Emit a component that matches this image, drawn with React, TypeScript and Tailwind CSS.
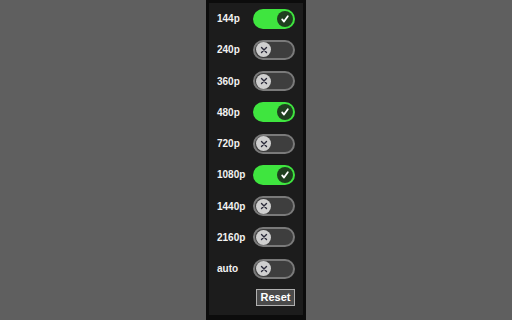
type Option = {
  label: string
  on: boolean
}

const options: Option[] = [
  { label: "144p", on: true },
  { label: "240p", on: false },
  { label: "360p", on: false },
  { label: "480p", on: true },
  { label: "720p", on: false },
  { label: "1080p", on: true },
  { label: "1440p", on: false },
  { label: "2160p", on: false },
  { label: "auto", on: false },
]

function Toggle({ on }: { on: boolean }) {
  if (on) {
    return (
      <div className="flex h-[20px] w-[42px] items-center justify-end rounded-full bg-[#3fe53f] pr-[2px]">
        <div className="flex h-[16px] w-[16px] items-center justify-center rounded-full bg-[#1f3f1f]">
          <svg width="10" height="10" viewBox="0 0 10 10">
            <path
              d="M2.2 5.4 L4 7.6 L7.8 2.2"
              fill="none"
              stroke="#ffffff"
              strokeWidth="1.8"
              strokeLinecap="round"
              strokeLinejoin="round"
            />
          </svg>
        </div>
      </div>
    )
  }
  return (
    <div className="flex h-[20px] w-[42px] items-center rounded-full border-2 border-[#7a7a7a] bg-[#3e3e3e] pl-[1px]">
      <div className="flex h-[15px] w-[15px] items-center justify-center rounded-full bg-[#cfcfcf]">
        <svg width="8" height="8" viewBox="0 0 8 8">
          <path
            d="M1.5 1.5 L6.5 6.5 M6.5 1.5 L1.5 6.5"
            fill="none"
            stroke="#2a2a3a"
            strokeWidth="1.4"
            strokeLinecap="round"
          />
        </svg>
      </div>
    </div>
  )
}

export default function App() {
  return (
    <div className="flex h-[320px] w-[512px] justify-center bg-[#5f5f5f] font-['Liberation_Sans',Arial,sans-serif]">
      <div className="flex h-full w-[100px] flex-col border-x-[3px] border-t-[3px] border-b-[5px] border-[#0c0c0c] bg-[#1c1c1c]">
        <div className="flex flex-col">
          {options.map((option) => (
            <div
              key={option.label}
              className="flex h-[31.25px] items-center justify-between pl-[8px] pr-[8px]"
            >
              <span className="text-[10px] font-bold text-[#f2f2f2]">
                {option.label}
              </span>
              <Toggle on={option.on} />
            </div>
          ))}
        </div>
        <div className="flex justify-end pr-[8px] pt-[5px]">
          <button className="h-[17px] w-[39px] border border-[#b0b0b0] bg-[#4a4a4a] text-[11px] font-bold leading-none text-white">
            Reset
          </button>
        </div>
      </div>
    </div>
  )
}
